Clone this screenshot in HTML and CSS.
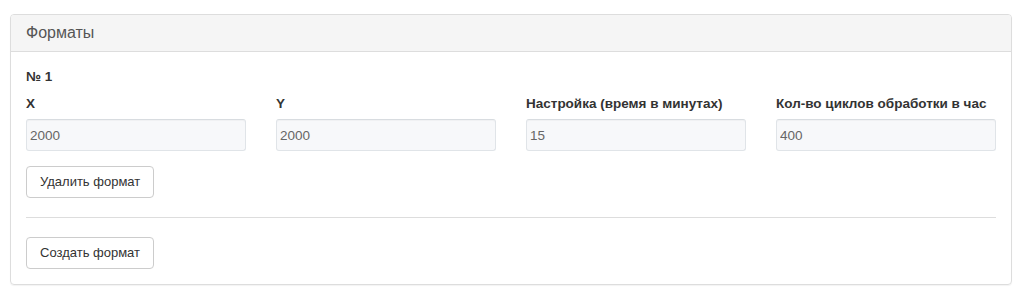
FILE: index.html
```html
<html>
<head>
  <link rel="stylesheet" href="styles.css">
</head>
<body>

<div class="page">
  <div class="panel">
    <div class="panel-heading">Форматы</div>
    <div class="panel-body">
      <div class="format">
        <div class="format-title">№ 1</div>
        <div class="row">
          <div class="form-group">
            <label>X</label>
            <input type="text" class="form-control" value="2000" readonly>
          </div>
          <div class="form-group">
            <label>Y</label>
            <input type="text" class="form-control" value="2000" readonly>
          </div>
          <div class="form-group">
            <label>Настройка (время в минутах)</label>
            <input type="text" class="form-control" value="15" readonly>
          </div>
          <div class="form-group">
            <label>Кол-во циклов обработки в час</label>
            <input type="text" class="form-control" value="400" readonly>
          </div>
        </div>
        <button type="button" class="btn">Удалить формат</button>
      </div>
      <hr>
      <button type="button" class="btn">Создать формат</button>
    </div>
  </div>
</div>

</body>
</html>
```

FILE: styles.css
```css
body {
  margin: 0;
  font-family: "Liberation Sans", Arial, sans-serif;
  font-size: 13.5px;
  color: #333;
  background: #fff;
}

.page {
  padding: 14px 12px 0 10px;
}

.panel {
  border: 1px solid #ddd;
  border-radius: 4px;
  box-shadow: 0 1px 1px rgba(0, 0, 0, 0.05);
}

.panel-heading {
  padding: 10px 15px;
  font-size: 16px;
  line-height: 16px;
  color: #555;
  background-color: #f5f5f5;
  border-bottom: 1px solid #ddd;
  border-radius: 3px 3px 0 0;
}

.panel-body {
  padding: 15px;
}

.format-title {
  font-weight: bold;
  line-height: 20px;
  margin-bottom: 7px;
}

.row {
  display: grid;
  grid-template-columns: repeat(4, 1fr);
  column-gap: 30px;
}

.form-group {
  margin-bottom: 15px;
}

label {
  display: block;
  font-weight: bold;
  line-height: 20px;
  margin-bottom: 5px;
}

.form-control {
  display: block;
  box-sizing: border-box;
  width: 100%;
  height: 32px;
  padding: 6px 3px;
  font-family: inherit;
  font-size: 13.5px;
  color: #666;
  background-color: #f7f8fa;
  border: 1px solid #e0e4e8;
  border-top-color: #d8dce0;
  border-radius: 3px;
  box-shadow: inset 0 1px 1px rgba(0, 0, 0, 0.03);
}

.btn {
  display: inline-block;
  height: 32px;
  padding: 6px 13px;
  font-family: inherit;
  font-size: 13px;
  line-height: 18px;
  color: #333;
  background-color: #fff;
  border: 1px solid #ccc;
  border-radius: 4px;
  cursor: pointer;
}

hr {
  margin: 19px 0 19px;
  border: 0;
  border-top: 1px solid #ddd;
}
```
